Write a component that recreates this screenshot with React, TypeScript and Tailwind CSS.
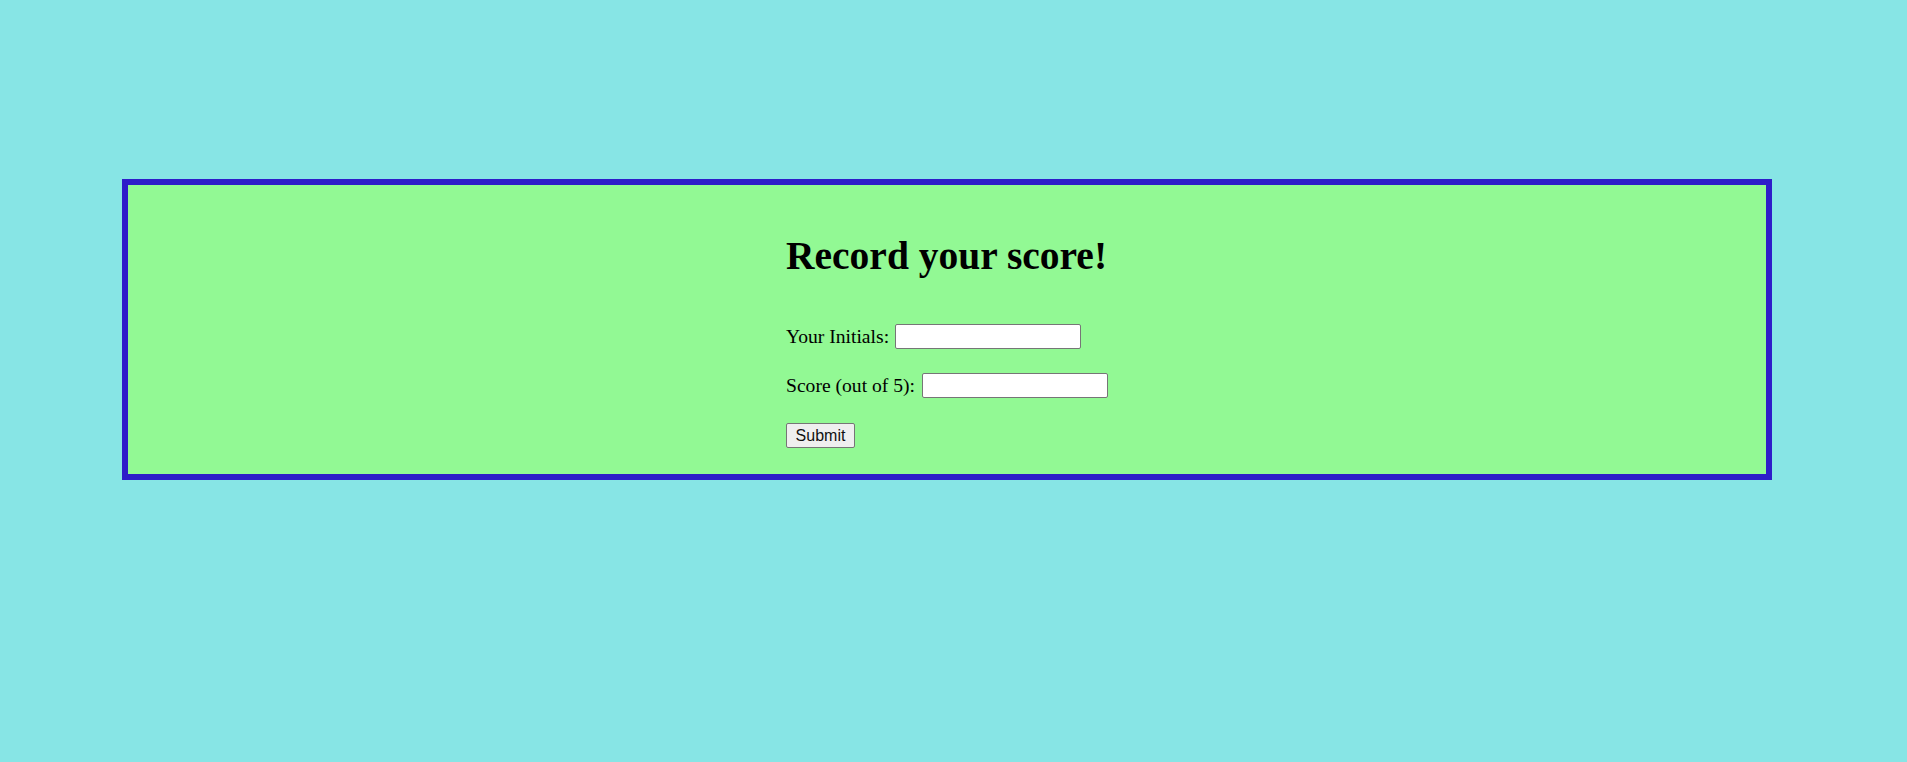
import React from "react";

export default function App() {
  return (
    <div className="min-h-screen w-full bg-[#87e5e5] pt-[179px] font-['Liberation_Serif',serif] text-black">
      <div className="ml-[122px] w-[1650px] h-[301px] border-[6px] border-[#2e1dc9] bg-[#92f994]">
        <div className="mx-auto w-fit pt-[49px]">
          <h1 className="text-[39.5px] leading-[44px] font-bold">Record your score!</h1>
          <div className="mt-[46px] flex items-center h-[25px] text-[19.6px] leading-[22px]">
            <span>Your Initials:</span>
            <input
              type="text"
              className="ml-[6px] w-[186px] h-[25px] bg-white border border-[#767676] rounded-[2px] px-[2px] font-['Liberation_Sans',sans-serif] text-[16px]"
            />
          </div>
          <div className="mt-[24px] flex items-center h-[25px] text-[19.6px] leading-[22px]">
            <span>Score (out of 5):</span>
            <input
              type="text"
              className="ml-[7px] w-[186px] h-[25px] bg-white border border-[#767676] rounded-[2px] px-[2px] font-['Liberation_Sans',sans-serif] text-[16px]"
            />
          </div>
          <div className="mt-[25px] flex">
            <button
              type="button"
              className="w-[69px] h-[25px] bg-[#efefef] border border-[#767676] rounded-[2px] font-['Liberation_Sans',sans-serif] text-[16px] leading-[20px] text-[#111]"
            >
              Submit
            </button>
          </div>
        </div>
      </div>
    </div>
  );
}
